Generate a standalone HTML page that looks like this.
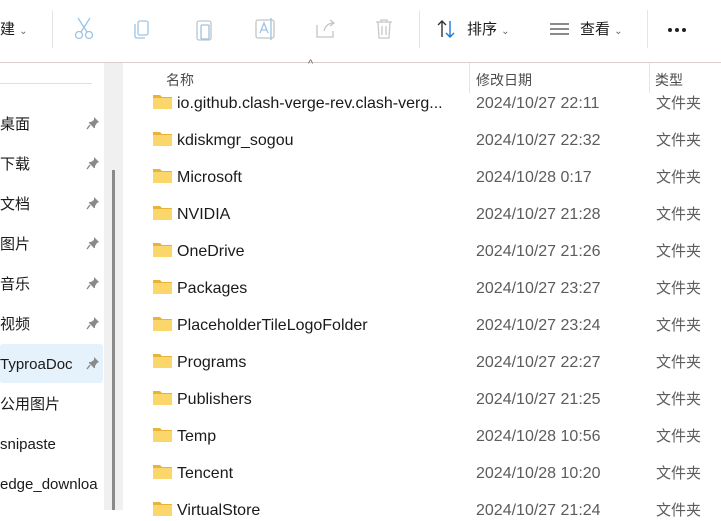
<!DOCTYPE html><html><head><meta charset="utf-8"><style>
body{margin:0;width:721px;height:510px;overflow:hidden;background:#fff;font-family:"Liberation Sans","Noto Sans CJK SC",sans-serif;position:relative;color:#1a1a1a}
.a{position:absolute;white-space:nowrap;line-height:20px}
.sep{position:absolute;width:1px;background:#e5e5e5}
.side{font-size:15px}
.fold{position:absolute;left:153px;width:19px;height:15px}
.nm{position:absolute;left:177px;font-size:16px;color:#1a1a1a}
.dt{position:absolute;left:476px;font-size:16px;color:#5c5c5c}
.tp{position:absolute;left:656px;font-size:15px;color:#5c5c5c}
.pin{position:absolute;left:86px}
</style></head><body>
<div class="a" style="left:0;top:20px;font-size:15px">建 <span style="font-size:10px;color:#666">⌄</span></div>
<div class="sep" style="left:52px;top:10px;height:38px"></div>
<div class="sep" style="left:419px;top:10px;height:38px"></div>
<div class="sep" style="left:647px;top:10px;height:38px"></div>
<svg class="a" style="left:70px;top:15px" width="340" height="30" fill="none" stroke="#9cc4e4" stroke-width="1.3">
<circle cx="9" cy="20" r="3.5"/><circle cx="19" cy="20" r="3.5"/><path d="M11 17 L20 3 M17 17 L8 3"/>
<rect x="68" y="6" width="10" height="14" rx="2"/><path d="M65 9 v12 q0 2 2 2 h8"/>
<rect x="127" y="6" width="14" height="19" rx="2" stroke="#c4c4c4"/><rect x="131" y="10" width="8" height="14" rx="1"/>
<rect x="186" y="5" width="18" height="18" rx="2" stroke="#c4c4c4"/><path d="M190 18 l4-10 l4 10 M191 15 h6 M201 3 v22"/>
<path d="M247 10 v12 h16 v-6 M254 16 q2-8 10-8 M260 5 l4 3 l-4 3" stroke="#c4c4c4"/>
<path d="M306 7 h16 M311 7 v-2 h6 v2 M308 7 l1 16 h10 l1-16 M312 11 v9 M316 11 v9" stroke="#c8c8c8"/>
</svg>
<svg class="a" style="left:437px;top:19px" width="24" height="20" fill="none" stroke-width="1.4"><path d="M5 18 V2 M1 6 l4-4 l4 4" stroke="#333"/><path d="M13 2 v16 M9 14 l4 4 l4-4" stroke="#1a7ad4"/></svg>
<div class="a" style="left:467px;top:20px;font-size:15px">排序 <span style="font-size:10px;color:#666">⌄</span></div>
<svg class="a" style="left:549px;top:21px" width="22" height="16" stroke="#444" stroke-width="1.3"><path d="M1 3h19M1 8h19M1 13h19"/></svg>
<div class="a" style="left:580px;top:20px;font-size:15px">查看 <span style="font-size:10px;color:#666">⌄</span></div>
<svg class="a" style="left:667px;top:27px" width="22" height="6" fill="#222"><circle cx="3" cy="3" r="2"/><circle cx="10" cy="3" r="2"/><circle cx="17" cy="3" r="2"/></svg>
<div class="a" style="left:0;top:62px;width:721px;height:1px;background:#d8d0cc"></div>
<div class="a" style="left:0;top:83px;width:92px;height:1px;background:#e0e0e0"></div>
<div class="a" style="left:104px;top:63px;width:19px;height:447px;background:#f0f0f0"></div>
<div class="a" style="left:112px;top:170px;width:3px;height:340px;background:#8a8a8a"></div>
<div class="a" style="left:0;top:344px;width:103px;height:39px;background:#e5f1fb;border-radius:3px"></div>
<div id="side"></div>
<div class="a" style="left:308px;top:54px;font-size:11px;color:#666">^</div>
<div class="a" style="left:166px;top:70px;font-size:14px;color:#4c4c4c">名称</div>
<div class="a" style="left:476px;top:70px;font-size:14px;color:#4c4c4c">修改日期</div>
<div class="a" style="left:655px;top:70px;font-size:14px;color:#4c4c4c">类型</div>
<div class="sep" style="left:469px;top:63px;height:30px"></div>
<div class="sep" style="left:649px;top:63px;height:30px"></div>
<div id="rows"></div>
<script>
var s=[["桌面",1],["下载",1],["文档",1],["图片",1],["音乐",1],["视频",1],["TyproaDoc",1],["公用图片",0],["snipaste",0],["edge_downloa",0]];
var h="";s.forEach(function(r,i){var y=125+40*i;
h+='<div class="a side" style="left:0;top:'+(y-10)+'px;width:103px;overflow:hidden">'+r[0]+'</div>';
if(r[1])h+='<svg class="pin" style="top:'+(y-9)+'px" width="14" height="14" viewBox="0 0 14 14" fill="#8a8a8a"><path d="M8 1 l5 5 l-2 1 l-2 3 l0 2 l-1 0 l-5-5 l0-1 l2 0 l3-2 z"/><path d="M4 9 l-3 4" stroke="#8a8a8a" stroke-width="1.4"/></svg>';});
document.getElementById("side").innerHTML=h;
var d=[["io.github.clash-verge-rev.clash-verg...","2024/10/27 22:11"],["kdiskmgr_sogou","2024/10/27 22:32"],["Microsoft","2024/10/28 0:17"],["NVIDIA","2024/10/27 21:28"],["OneDrive","2024/10/27 21:26"],["Packages","2024/10/27 23:27"],["PlaceholderTileLogoFolder","2024/10/27 23:24"],["Programs","2024/10/27 22:27"],["Publishers","2024/10/27 21:25"],["Temp","2024/10/28 10:56"],["Tencent","2024/10/28 10:20"],["VirtualStore","2024/10/27 21:24"]];
h="";d.forEach(function(r,i){var y=104+37*i;
h+='<svg class="fold" style="top:'+(y-10)+'px" viewBox="0 0 19 15"><path d="M0 1h7l2 2h10v12H0z" fill="#e8b437"/><rect x="0" y="4" width="19" height="11" fill="#fbd66a"/></svg>';
h+='<div class="nm a" style="top:'+(y-10)+'px">'+r[0]+'</div><div class="dt a" style="top:'+(y-10)+'px">'+r[1]+'</div><div class="tp a" style="top:'+(y-10)+'px">文件夹</div>';});
document.getElementById("rows").innerHTML=h;
</script>
</body></html>
